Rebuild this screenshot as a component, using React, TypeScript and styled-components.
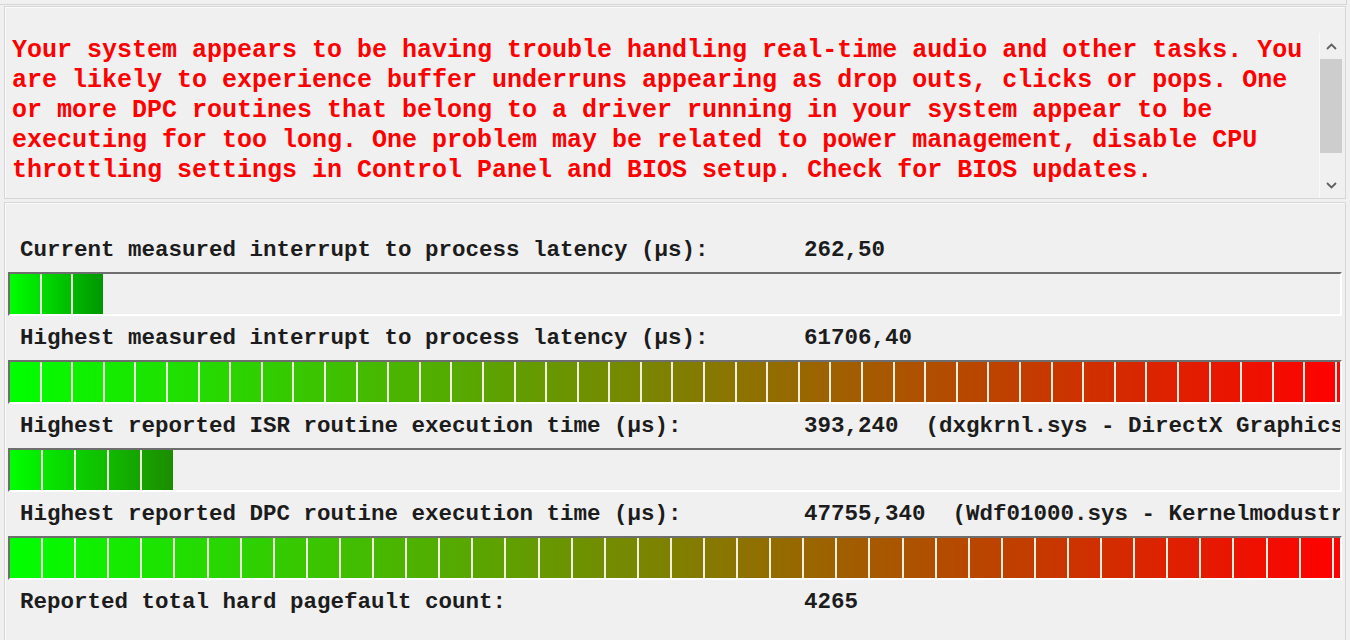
import React from "react";
import styled, { createGlobalStyle } from "styled-components";

const GlobalStyle = createGlobalStyle`
  html, body {
    margin: 0;
    padding: 0;
    background: #f0f0f0;
    overflow: hidden;
  }
  body {
    font-family: "Liberation Mono", "Courier New", monospace;
  }
`;

const Window = styled.div`
  width: 1350px;
  height: 640px;
  overflow: hidden;
  background: #f0f0f0;
  display: flex;
  flex-direction: column;
`;

const TopStrip = styled.div`
  flex: 0 0 auto;
  height: 4px;
  margin-right: 3px;
  border-bottom: 1px solid #d6d6d6;
  border-right: 1px solid #d6d6d6;
`;

const Panel = styled.section<{ $gap: number }>`
  flex: 0 0 auto;
  margin: ${(p) => p.$gap}px 4px 0 4px;
  border: 1px solid #d6d6d6;
  box-shadow: inset 1px 1px 0 #fbfbfb;
`;

const MessagePanel = styled(Panel)`
  display: flex;
  padding: 26px 2px 0 7px;
`;

const MessageText = styled.div`
  width: 1307px;
  height: 165px;
  box-sizing: border-box;
  padding-top: 3px;
  overflow: hidden;
  color: #ff0000;
  font-family: "Liberation Mono", "Courier New", monospace;
  font-weight: bold;
  font-size: 25px;
  line-height: 30px;
  white-space: normal;
`;

const ScrollBar = styled.div`
  width: 23px;
  height: 165px;
  border-left: 1px solid #fafafa;
  display: flex;
  flex-direction: column;
  background: #f0f0f0;
`;

const ArrowButton = styled.div`
  height: 26px;
  display: flex;
  align-items: center;
  justify-content: center;
  color: #606060;
`;

const Thumb = styled.div`
  height: 94px;
  margin-right: 1px;
  background: #cdcdcd;
`;

const Track = styled.div`
  flex: 1;
`;

const MetricsPanel = styled(Panel)`
  height: 450px;
  padding: 25px 3px 0 3px;
  display: flex;
  flex-direction: column;
`;

const MetricRow = styled.div`
  height: 44px;
  display: grid;
  grid-template-columns: 784px 1fr;
  padding: 0 2px 0 12px;
  color: #1c1c1c;
  font-family: "Liberation Mono", "Courier New", monospace;
  font-weight: bold;
  font-size: 22.5px;
  line-height: 44px;
  white-space: pre;
  overflow: hidden;
`;

const Label = styled.span``;

const Value = styled.span`
  overflow: hidden;
`;

const Bar = styled.div`
  height: 44px;
  box-sizing: border-box;
  border-top: 2px solid #6e6e6e;
  border-left: 2px solid #6e6e6e;
  border-bottom: 2px solid #ffffff;
  border-right: 2px solid #ffffff;
  display: flex;
  overflow: hidden;
  background: #f0f0f0;
`;

const Segment = styled.div<{ $w: number }>`
  flex: 0 0 ${(p) => p.$w}px;
  height: 100%;
  &:not(:last-child) {
    border-right: 2px solid #f1efdf;
  }
`;

const Chevron = ({ up }: { up?: boolean }) => (
  <svg width="11" height="7" viewBox="0 0 11 7">
    <polyline
      points={up ? "1,6 5.5,1.5 10,6" : "1,1 5.5,5.5 10,1"}
      fill="none"
      stroke="#5f5f5f"
      strokeWidth="1.8"
    />
  </svg>
);

type Rgb = [number, number, number];
const mix = (a: Rgb, b: Rgb, t: number) =>
  `rgb(${Math.round(a[0] + (b[0] - a[0]) * t)},${Math.round(
    a[1] + (b[1] - a[1]) * t
  )},${Math.round(a[2] + (b[2] - a[2]) * t)})`;

const INNER = 1330;
const GREEN: Rgb = [0, 255, 0];
const RED: Rgb = [255, 0, 0];

const Meter = ({
  count,
  seg,
  end,
}: {
  count?: number;
  seg: number;
  end?: Rgb;
}) => {
  const period = seg + 2;
  const full = count === undefined;
  const n = full ? Math.ceil(INNER / period) + 1 : count!;
  const span = full ? INNER : n * period - 2;
  const to = full ? RED : end!;
  const segs = Array.from({ length: n }, (_, i) => {
    const l = i * period;
    const r = l + seg;
    const bg = `linear-gradient(to right, ${mix(
      GREEN,
      to,
      Math.min(1, l / span)
    )}, ${mix(GREEN, to, Math.min(1, r / span))})`;
    return <Segment key={i} $w={seg} style={{ backgroundImage: bg }} />;
  });
  return <Bar>{segs}</Bar>;
};

const metrics = [
  {
    label: "Current measured interrupt to process latency (µs):",
    value: "262,50",
    meter: { count: 3, seg: 29.6, end: [0, 150, 0] as Rgb },
  },
  {
    label: "Highest measured interrupt to process latency (µs):",
    value: "61706,40",
    meter: { seg: 29.6 },
  },
  {
    label: "Highest reported ISR routine execution time (µs):",
    value: "393,240  (dxgkrnl.sys - DirectX Graphics Kernel)",
    meter: { count: 5, seg: 31.1, end: [28, 140, 0] as Rgb },
  },
  {
    label: "Highest reported DPC routine execution time (µs):",
    value: "47755,340  (Wdf01000.sys - Kernelmodustreiberframework-Laufzeit)",
    meter: { seg: 31.1 },
  },
];

export default function App() {
  return (
    <Window>
      <GlobalStyle />
      <TopStrip />
      <MessagePanel $gap={1}>
        <MessageText>
          Your system appears to be having trouble handling real-time audio and
          other tasks. You are likely to experience buffer underruns appearing
          as drop outs, clicks or pops. One or more DPC routines that belong to
          a driver running in your system appear to be executing for too long.
          One problem may be related to power management, disable CPU
          throttling settings in Control Panel and BIOS setup. Check for BIOS
          updates.
        </MessageText>
        <ScrollBar>
          <ArrowButton>
            <Chevron up />
          </ArrowButton>
          <Thumb />
          <Track />
          <ArrowButton>
            <Chevron />
          </ArrowButton>
        </ScrollBar>
      </MessagePanel>
      <MetricsPanel $gap={3}>
        {metrics.map((m) => (
          <React.Fragment key={m.label}>
            <MetricRow>
              <Label>{m.label}</Label>
              <Value>{m.value}</Value>
            </MetricRow>
            <Meter {...m.meter} />
          </React.Fragment>
        ))}
        <MetricRow>
          <Label>Reported total hard pagefault count:</Label>
          <Value>4265</Value>
        </MetricRow>
      </MetricsPanel>
    </Window>
  );
}
